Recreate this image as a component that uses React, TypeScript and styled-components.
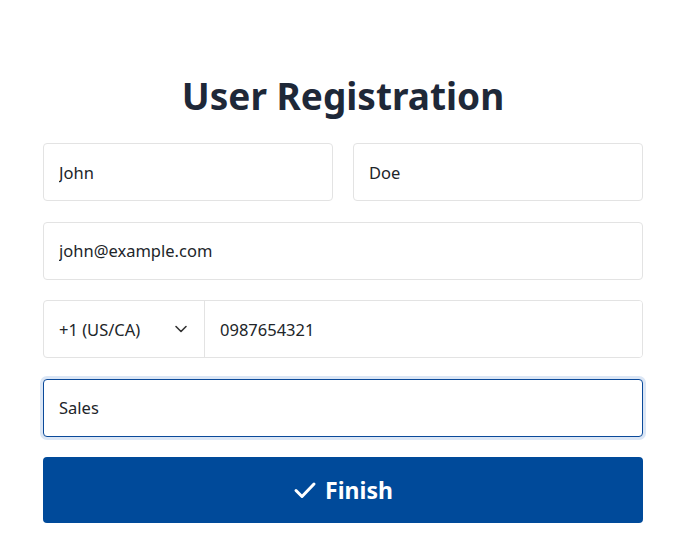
import styled, { createGlobalStyle } from "styled-components";

const GlobalStyle = createGlobalStyle`
  * {
    box-sizing: border-box;
  }

  body {
    margin: 0;
    background: #ffffff;
    font-family: "Noto Sans", "Open Sans", Arial, sans-serif;
    color: #212529;
  }
`;

const ScWrap = styled.div`
  padding: 69px 2px 0 0;
`;

const ScPage = styled.main`
  width: 600px;
  margin: 0 auto;
  display: flex;
  flex-direction: column;
  gap: 20.5px;
`;

const ScTitle = styled.h1`
  margin: 2px 0 1.5px;
  text-align: center;
  font-size: 37px;
  line-height: 50px;
  font-weight: 700;
  color: #1e2838;
`;

const ScRow = styled.div`
  display: flex;
  gap: 20px;
`;

const ScInput = styled.input<{ $focused?: boolean }>`
  flex: 1;
  min-width: 0;
  height: 58px;
  padding: 0 15px;
  font: inherit;
  font-size: 16.5px;
  color: #212529;
  background: #fff;
  border: 1px solid ${(p) => (p.$focused ? "#0b4a9a" : "#e3e3e3")};
  border-radius: 4px;
  outline: none;
  box-shadow: ${(p) => (p.$focused ? "0 0 0 3px #dbe6f5" : "none")};
`;

const ScPhone = styled.div`
  flex: 1;
  display: flex;
  height: 58px;
  border: 1px solid #e3e3e3;
  border-radius: 4px;
  overflow: hidden;
`;

const ScSelect = styled.div`
  width: 161px;
  flex-shrink: 0;
  display: flex;
  align-items: center;
  justify-content: space-between;
  padding: 0 16px 0 15px;
  font-size: 16.5px;
  border-right: 1px solid #e3e3e3;
`;

const ScPhoneInput = styled.input`
  flex: 1;
  min-width: 0;
  border: none;
  outline: none;
  padding: 0 15px;
  font: inherit;
  font-size: 16.5px;
  color: #212529;
`;

const ScButton = styled.button`
  height: 66px;
  display: flex;
  align-items: center;
  justify-content: center;
  gap: 8px;
  border: none;
  border-radius: 4px;
  background: #004a9a;
  color: #fff;
  font: inherit;
  font-size: 23px;
  font-weight: 700;
  cursor: pointer;
`;

const Chevron = () => (
  <svg width="14" height="14" viewBox="0 0 14 14" fill="none">
    <path d="M2 4.5 7 9.5 12 4.5" stroke="#333" strokeWidth="1.6" strokeLinecap="round" strokeLinejoin="round" />
  </svg>
);

const Check = () => (
  <svg width="24" height="24" viewBox="0 0 24 24" fill="none">
    <path d="M3 12.5 9 18.5 21 6" stroke="#fff" strokeWidth="3" strokeLinecap="round" strokeLinejoin="round" />
  </svg>
);

export default function App() {
  return (
    <>
      <GlobalStyle />
      <ScWrap>
        <ScPage>
          <ScTitle>User Registration</ScTitle>
          <ScRow>
            <ScInput defaultValue="John" />
            <ScInput defaultValue="Doe" />
          </ScRow>
          <ScRow>
            <ScInput defaultValue="john@example.com" />
          </ScRow>
          <ScRow>
            <ScPhone>
              <ScSelect>
                +1 (US/CA)
                <Chevron />
              </ScSelect>
              <ScPhoneInput defaultValue="0987654321" />
            </ScPhone>
          </ScRow>
          <ScRow>
            <ScInput $focused defaultValue="Sales" />
          </ScRow>
          <ScButton>
            <Check />
            Finish
          </ScButton>
        </ScPage>
      </ScWrap>
    </>
  );
}
